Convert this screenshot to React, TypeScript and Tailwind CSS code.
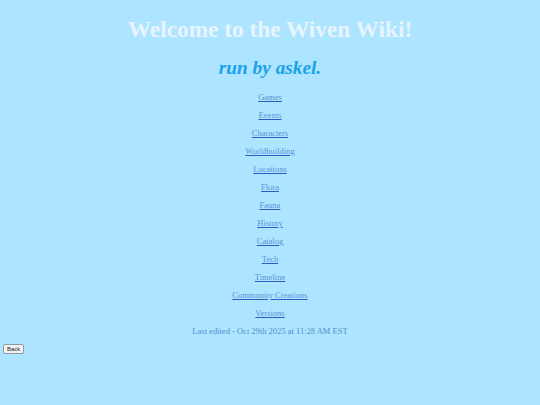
const links = [
  'Games',
  'Events',
  'Characters',
  'Worldbuilding',
  'Locations',
  'Flora',
  'Fauna',
  'History',
  'Catalog',
  'Tech',
  'Timeline',
  'Community Creations',
  'Versions',
];

export default function App() {
  return (
    <div className="min-h-[405px] bg-[#ade4ff] font-['Liberation_Serif',serif] pt-[14px]">
      <h1 className="text-center text-[23.3px] leading-[30px] font-bold text-[#e6f5ff]">
        Welcome to the Wiven Wiki!
      </h1>
      <h2 className="mt-[12px] text-center text-[19.3px] leading-[24px] font-bold italic text-[#19a2ea]">
        run by askel.
      </h2>
      <div className="mt-[8px] flex flex-col items-center">
        {links.map((l) => (
          <a
            key={l}
            href="#"
            className="h-[18px] leading-[18px] text-[8.5px] text-[#5596d6] underline decoration-[#2a5cc4]"
          >
            {l}
          </a>
        ))}
        <p className="h-[18px] leading-[18px] text-[8.5px] text-[#4c93cc]">
          Last edited - Oct 29th 2025 at 11:28 AM EST
        </p>
      </div>
      <div className="mt-[4px] px-[3px] flex">
        <button className="block h-[10px] text-[6px] leading-[6px] px-[3px] bg-[#f2f2f2] border border-[#8a9aa8] rounded-[2px] font-['Liberation_Sans',sans-serif] text-[#222]">
          Back
        </button>
      </div>
    </div>
  );
}
